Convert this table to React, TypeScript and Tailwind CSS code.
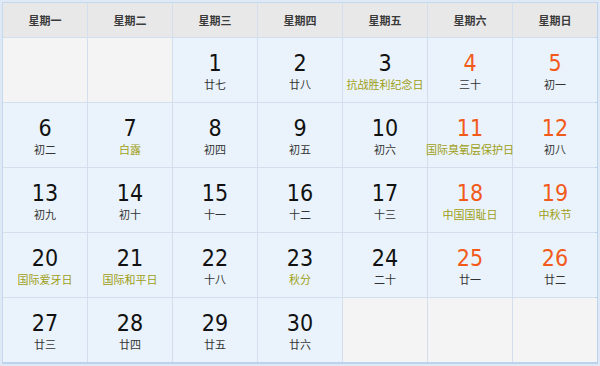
import React from "react";

type Cell = { d?: number; l?: string; fest?: boolean; we?: boolean };

const weeks: Cell[][] = [
  [{}, {}, { d: 1, l: "廿七" }, { d: 2, l: "廿八" }, { d: 3, l: "抗战胜利纪念日", fest: true }, { d: 4, l: "三十", we: true }, { d: 5, l: "初一", we: true }],
  [{ d: 6, l: "初二" }, { d: 7, l: "白露", fest: true }, { d: 8, l: "初四" }, { d: 9, l: "初五" }, { d: 10, l: "初六" }, { d: 11, l: "国际臭氧层保护日", fest: true, we: true }, { d: 12, l: "初八", we: true }],
  [{ d: 13, l: "初九" }, { d: 14, l: "初十" }, { d: 15, l: "十一" }, { d: 16, l: "十二" }, { d: 17, l: "十三" }, { d: 18, l: "中国国耻日", fest: true, we: true }, { d: 19, l: "中秋节", fest: true, we: true }],
  [{ d: 20, l: "国际爱牙日", fest: true }, { d: 21, l: "国际和平日", fest: true }, { d: 22, l: "十八" }, { d: 23, l: "秋分", fest: true }, { d: 24, l: "二十" }, { d: 25, l: "廿一", we: true }, { d: 26, l: "廿二", we: true }],
  [{ d: 27, l: "廿三" }, { d: 28, l: "廿四" }, { d: 29, l: "廿五" }, { d: 30, l: "廿六" }, {}, {}, {}],
];

const heads = ["星期一", "星期二", "星期三", "星期四", "星期五", "星期六", "星期日"];

const cjk = { fontFamily: '"Noto Sans CJK SC", "Noto Sans", sans-serif' };
const num = { fontFamily: '"DejaVu Sans Condensed", "DejaVu Sans", sans-serif', fontStretch: "condensed" };

export default function App() {
  return (
    <div className="w-[600px] h-[366px] bg-[#dfe9f5] pt-[2px] pl-[2px] overflow-hidden">
      <div className="w-[596px] h-[362px] border border-[#c6d8ee] border-r-[3px] border-r-[#bcd3ee] border-b-[2px] border-b-[#bcd3ee]">
        <div className="grid grid-cols-[repeat(7,84px)] grid-rows-[34px_repeat(5,64px)] gap-px bg-[#d3dfec]">
          {heads.map((h) => (
            <div key={h} className="bg-[#e8e8e8] flex items-center justify-center text-[11px] font-bold text-[#3a3a3a]" style={cjk}>
              {h}
            </div>
          ))}
          {weeks.flat().map((c, i) =>
            c.d === undefined ? (
              <div key={i} className="bg-[#f4f4f4]" />
            ) : (
              <div key={i} className="bg-[#eaf3fb] flex flex-col items-center pt-[12px]">
                <div className={`text-[23px] leading-[26px] ${c.we ? "text-[#f25a1a]" : "text-[#111]"}`} style={num}>
                  {c.d}
                </div>
                <div className={`text-[11px] leading-[16px] whitespace-nowrap ${c.fest ? "text-[#9e9e14]" : "text-[#333]"}`} style={cjk}>
                  {c.l}
                </div>
              </div>
            )
          )}
        </div>
      </div>
    </div>
  );
}
